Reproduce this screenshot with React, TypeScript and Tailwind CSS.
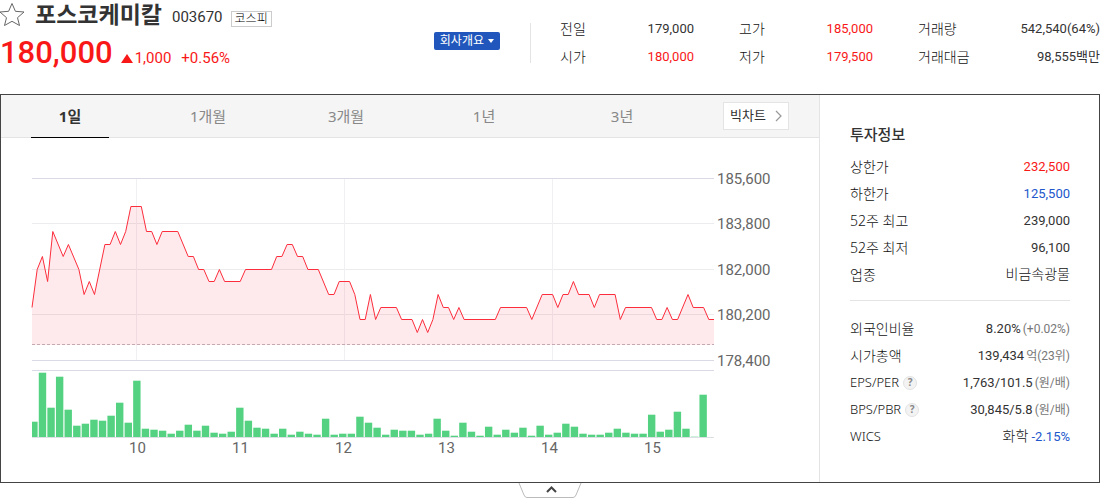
import React from "react";

import clsx from "clsx";

const SUMMARY = [
  { label: "전일", value: "179,000" },
  { label: "고가", value: "185,000", up: true },
  { label: "거래량", value: "542,540(64%)" },
  { label: "시가", value: "180,000", up: true },
  { label: "저가", value: "179,500", up: true },
  { label: "거래대금", value: "98,555백만" },
];

const PERIODS = ["1일", "1개월", "3개월", "1년", "3년"];

// [tick, y] - one tick is three minutes
const PRICE_POINTS = [
  [0, 169], [1, 131], [2, 118], [3, 143], [4, 93], [6, 118], [7, 106],
  [9, 131], [10, 156], [11, 143], [12, 156], [14, 106], [15, 106], [16, 93],
  [17, 106], [18, 93], [19, 68], [21, 68], [22, 93], [23, 93], [24, 106],
  [25, 93], [28, 93], [30, 118], [31, 118], [32, 131], [33, 131], [34, 143],
  [35, 143], [36, 131], [37, 143], [40, 143], [41, 131], [46, 131], [47, 118],
  [48, 118], [49, 106], [50, 106], [51, 118], [52, 118], [53, 131], [55, 131],
  [57, 156], [58, 156], [59, 143], [61, 143], [62, 156], [63, 181], [64, 181],
  [65, 156], [66, 181], [67, 169], [70, 169], [71, 181], [73, 181], [74, 194],
  [75, 181], [76, 194], [77, 181], [78, 156], [79, 169], [80, 169], [81, 181],
  [82, 169], [83, 181], [89, 181], [90, 169], [95, 169], [96, 181], [98, 156],
  [100, 156], [101, 169], [102, 156], [103, 156], [104, 143], [105, 156],
  [107, 156], [108, 169], [109, 156], [112, 156], [113, 181], [114, 169],
  [119, 169], [120, 181], [121, 181], [122, 169], [123, 181], [124, 181],
  [126, 156], [127, 169], [129, 169], [130, 181], [131, 181],
];

// one bar per five minutes
const VOLUMES = [
  15, 64, 29, 60, 27, 11, 13, 17, 16, 21, 34, 14, 56, 8, 7, 6, 3, 6, 12, 6,
  11, 4, 3, 5, 29, 16, 9, 8, 3, 8, 2, 5, 3, 2, 18, 2, 3, 3, 20, 14, 9, 2, 7,
  6, 6, 2, 3, 18, 6, 1, 14, 5, 1, 10, 2, 7, 4, 9, 1, 11, 2, 4, 13, 10, 3, 2,
  2, 4, 8, 4, 3, 3, 22, 5, 7, 25, 8, 0, 42,
];

const PRICE_LABELS = [
  { text: "185,600", y: 40 },
  { text: "183,800", y: 85 },
  { text: "182,000", y: 131 },
  { text: "180,200", y: 176 },
  { text: "178,400", y: 222 },
];

const HOURS = ["10", "11", "12", "13", "14", "15"];

const LEFT = 31;
const RIGHT = 713;
const BASE = 206;

const PriceChart = () => {
  const line = PRICE_POINTS.map(
    ([tick, y]) => `${(LEFT + (tick * (RIGHT - LEFT)) / 131).toFixed(1)},${y + 0.5}`
  ).join(" ");

  return (
    <svg viewBox="0 0 818 344" className="block w-full" role="img" aria-label="1일 차트">
      <g strokeWidth="1" fill="none">
        {[85, 131, 176].map((y) => (
          <path key={y} d={`M${LEFT} ${y + 0.5}H${RIGHT}`} stroke="#ececee" />
        ))}
        {[135, 343, 551].map((x) => (
          <path key={x} d={`M${x + 0.5} 41V222`} stroke="#f0f0f2" />
        ))}
        {[40, 222, 232].map((y) => (
          <path key={y} d={`M${LEFT} ${y + 0.5}H${RIGHT}`} stroke="#dadae6" />
        ))}
      </g>

      <polygon
        points={`${LEFT},${BASE + 1} ${line} ${RIGHT},${BASE + 1}`}
        fill="#f81828"
        fillOpacity="0.09"
      />
      <polyline points={line} fill="none" stroke="#fc2d3c" strokeWidth="1" />
      <path
        d={`M${LEFT} ${BASE + 0.5}H${RIGHT}`}
        stroke="#c4a9b0"
        strokeDasharray="3 2"
      />

      <path d={`M${LEFT} 299.5H${RIGHT}`} stroke="#dcdfe4" />
      {VOLUMES.map((height, i) => {
        const x = Math.max(LEFT, 29.2 + i * 8.58);
        return (
          <rect
            key={i}
            x={x}
            y={299 - height - 0.3}
            width={29.2 + i * 8.58 + 7.4 - x}
            height={height + 0.3}
            fill="#54d282"
          />
        );
      })}

      <g fontSize="15" fill="#666">
        {PRICE_LABELS.map(({ text, y }) => (
          <text key={text} x="716" y={y + 6}>
            {text}
          </text>
        ))}
        {HOURS.map((hour, i) => (
          <text key={hour} x={136.5 + i * 103} y="315" textAnchor="middle">
            {hour}
          </text>
        ))}
      </g>
    </svg>
  );
};

const InfoRow = ({
  label,
  help,
  children,
}: {
  label: string;
  help?: boolean;
  children: React.ReactNode;
}) => (
  <div className="flex h-[27px] items-center justify-between text-[13px]">
    <dt
      className={clsx(
        "flex items-center gap-1 font-['Noto_Sans','Noto_Sans_CJK_KR',sans-serif] font-light text-[#111]",
        /^[A-Z]/.test(label) ? "text-[13px]" : "text-[14px]"
      )}
    >
      {label}
      {help && (
        <button
          type="button"
          aria-label={`${label} 도움말`}
          className="flex size-[14px] items-center justify-center rounded-full border border-[#e2e2e2] bg-[#f3f3f3] text-[10px] font-bold text-[#888]"
        >
          ?
        </button>
      )}
    </dt>
    <dd>{children}</dd>
  </div>
);

const Unit = ({ children }: { children: React.ReactNode }) => (
  <span className="ml-[2px] text-[12px] text-[#777]">{children}</span>
);

const App = () => {
  return (
    <main className="bg-white font-['Roboto','Noto_Sans_CJK_KR',sans-serif] text-[#333]">
      <header className="mb-2 flex h-[86px] items-center">
        <div className="flex flex-1 flex-col self-start">
          <div className="flex h-8 items-center">
            <button type="button" aria-label="관심종목" className="mr-[10px] -ml-px">
              <svg width="26" height="26" viewBox="0 0 26 26" className="block">
                <path
                  d="M13 0.5L16.4 8.3L25 9L18.5 14.7L20.5 22.5L13 18.3L5.5 22.5L7.5 14.7L1 9L9.6 8.3Z"
                  fill="none"
                  stroke="#666"
                />
              </svg>
            </button>
            <h1 className="text-[23px] leading-8 font-bold">포스코케미칼</h1>
            <span className="mt-[2px] ml-[10px] text-[15px]">003670</span>
            <span className="mt-[6px] ml-2 flex h-4 items-center border border-[#ccc] px-[3px] text-[12px] font-light text-black">
              코스피
            </span>
          </div>
          <div className="flex h-[42px] items-baseline text-[15px] text-[#f81818]">
            <strong className="text-[31px] leading-[42px] font-medium">180,000</strong>
            <svg width="12" height="9" viewBox="0 0 12 9" className="mb-[3px] ml-2">
              <path d="M6 0L12 9H0Z" fill="#f81818" />
            </svg>
            <span className="ml-[2px]">1,000</span>
            <span className="ml-[10px]">+0.56%</span>
          </div>
        </div>

        <button
          type="button"
          className="mr-[30px] mb-1 flex h-[18px] items-center gap-1 rounded-xs bg-[#2157bc] px-[6px] text-[12px] text-white"
        >
          회사개요
          <svg width="6" height="4" viewBox="0 0 6 4">
            <path d="M0 0H6L3 4Z" fill="#fff" />
          </svg>
        </button>

        <div className="h-10 w-px bg-[#e4e4e4]" />
        <dl className="ml-[29px] grid grid-cols-[134px_134px_182px] gap-x-[45px]">
          {SUMMARY.map(({ label, value, up }) => (
            <div key={label} className="flex h-7 items-center justify-between">
              <dt className="text-[14px] font-light text-[#111]">{label}</dt>
              <dd className={clsx("text-[13px]", up && "text-[#f81818]")}>{value}</dd>
            </div>
          ))}
        </dl>
      </header>

      <section className="flex border border-[#444]">
        <div className="min-w-0 flex-1">
          <div className="flex h-[43px] items-center border-b border-[#e4e4e6] bg-[#f5f5f5]">
            <div role="tablist" className="ml-[30px] flex gap-[60px]">
              {PERIODS.map((period, i) => (
                <button
                  key={period}
                  type="button"
                  role="tab"
                  aria-selected={i === 0}
                  className={clsx(
                    "-mb-px h-[43px] w-[78px] border-b font-['Noto_Sans','Noto_Sans_CJK_KR',sans-serif] text-[15px]",
                    i === 0
                      ? "border-black font-bold text-[#333]"
                      : "border-transparent text-[#888]"
                  )}
                >
                  {period}
                </button>
              ))}
            </div>
            <button
              type="button"
              className="mr-[30px] ml-auto flex h-7 w-[66px] items-center justify-between border border-[#e4e4e6] bg-white px-[6px] text-[13px]"
            >
              빅차트
              <svg width="7" height="12" viewBox="0 0 7 12">
                <path d="M1 1L6 6L1 11" fill="none" stroke="#999" strokeWidth="1.2" />
              </svg>
            </button>
          </div>
          <PriceChart />
        </div>

        <aside className="w-[280px] border-l border-[#e4e4e6] pt-[30px] pr-[29px] pl-[30px]">
          <h2 className="mb-2 text-[15px] leading-5 font-medium">투자정보</h2>
          <dl>
            <InfoRow label="상한가">
              <span className="text-[#f81818]">232,500</span>
            </InfoRow>
            <InfoRow label="하한가">
              <span className="text-[#2157cc]">125,500</span>
            </InfoRow>
            <InfoRow label="52주 최고">239,000</InfoRow>
            <InfoRow label="52주 최저">96,100</InfoRow>
            <InfoRow label="업종">
              <span className="text-[14px] font-light text-[#111]">비금속광물</span>
            </InfoRow>
          </dl>
          <dl className="mt-3 border-t border-[#e4e4e6] pt-[14px]">
            <InfoRow label="외국인비율">
              8.20%<Unit>(+0.02%)</Unit>
            </InfoRow>
            <InfoRow label="시가총액">
              139,434<Unit>억(23위)</Unit>
            </InfoRow>
            <InfoRow label="EPS/PER" help>
              1,763/101.5<Unit>(원/배)</Unit>
            </InfoRow>
            <InfoRow label="BPS/PBR" help>
              30,845/5.8<Unit>(원/배)</Unit>
            </InfoRow>
            <InfoRow label="WICS">
              <span className="text-[14px] font-light text-[#111]">화학</span>{" "}
              <span className="text-[#2157cc]">-2.15%</span>
            </InfoRow>
          </dl>
        </aside>
      </section>

      <button type="button" aria-label="접기" className="mx-auto block">
        <svg width="64" height="15" viewBox="0 0 64 15" className="block">
          <path
            d="M1 0L6 12Q7 14.5 9 14.5H55Q57 14.5 58 12L63 0"
            fill="none"
            stroke="#bbb"
          />
          <path d="M29 9L33.5 4.5L38 9" fill="none" stroke="#444" strokeWidth="2" />
        </svg>
      </button>
    </main>
  );
};

export default App;
